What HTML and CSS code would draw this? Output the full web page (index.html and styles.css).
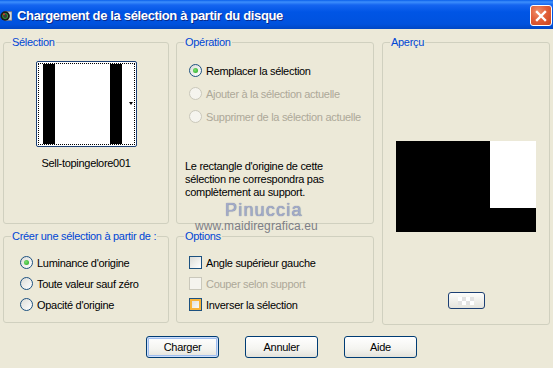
FILE: index.html
```html
<!DOCTYPE html>
<html lang="fr">
  <head>
    <meta charset="UTF-8" />
    <meta name="viewport" content="width=device-width, initial-scale=1.0" />
    <title>Chargement de la sélection à partir du disque</title>
    <link rel="stylesheet" href="styles.css">
  </head>
  <body>
    <div class="titlebar">
      <span class="appicon">
        <svg width="14" height="14" viewBox="0 0 14 14">
          <rect x="6" y="2" width="8" height="10" fill="#d8d8d8" stroke="#7a7a7a" />
          <circle cx="6" cy="7" r="5.5" fill="#1a1a1a" />
          <circle cx="6" cy="7" r="3" fill="#3a3a3a" stroke="#2faa3a" stroke-width="1" />
          <circle cx="4.5" cy="5" r="1.2" fill="#d83a2a" />
        </svg>
      </span>
      <span class="title">Chargement de la sélection à partir du disque</span>
      <span class="close">
        <svg width="12" height="12" viewBox="0 0 12 12">
          <path d="M2 2 L10 10 M10 2 L2 10" stroke="#fff" stroke-width="2.4" stroke-linecap="square" />
        </svg>
      </span>
    </div>

    <div class="panes">
      <fieldset class="box sel">
        <legend>Sélection</legend>
        <div class="thumb">
          <div class="thumb-focus">
            <svg width="95" height="80" viewBox="0 0 95 80">
              <rect x="0" y="0" width="95" height="80" fill="#fff" />
              <rect x="4" y="0" width="12" height="80" fill="#000" />
              <rect x="71" y="0" width="12" height="80" fill="#000" />
            </svg>
          </div>
          <span class="thumb-arrow"></span>
        </div>
        <div class="thumb-name">Sell-topingelore001</div>
      </fieldset>

      <fieldset class="box op">
        <legend>Opération</legend>
        <div class="choices">
          <div class="choice"><span class="radio checked"></span>Remplacer la sélection</div>
          <div class="choice disabled"><span class="radio"></span>Ajouter à la sélection actuelle</div>
          <div class="choice disabled"><span class="radio"></span>Supprimer de la sélection actuelle</div>
        </div>
        <p class="note">Le rectangle d'origine de cette<br>sélection ne correspondra pas<br>complètement au support.</p>
      </fieldset>

      <fieldset class="box preview">
        <legend>Aperçu</legend>
        <div class="preview-img"><div class="preview-white"></div></div>
        <div class="mini-btn"><span class="mini-check"></span></div>
      </fieldset>

      <fieldset class="box create">
        <legend>Créer une sélection à partir de :</legend>
        <div class="choices tight">
          <div class="choice"><span class="radio checked"></span>Luminance d'origine</div>
          <div class="choice"><span class="radio"></span>Toute valeur sauf zéro</div>
          <div class="choice"><span class="radio"></span>Opacité d'origine</div>
        </div>
      </fieldset>

      <fieldset class="box options">
        <legend>Options</legend>
        <div class="choices tight">
          <div class="choice"><span class="check"></span>Angle supérieur gauche</div>
          <div class="choice disabled"><span class="check"></span>Couper selon support</div>
          <div class="choice"><span class="check hot"></span>Inverser la sélection</div>
        </div>
      </fieldset>
    </div>

    <div class="buttons">
      <button class="xpbtn default">Charger</button>
      <button class="xpbtn">Annuler</button>
      <button class="xpbtn">Aide</button>
    </div>

    <div class="wm-name">Pinuccia</div>
    <div class="wm-url">www.maidiregrafica.eu</div>
  </body>
</html>
```

FILE: styles.css
```css
body {
  margin: 0;
  width: 553px;
  height: 368px;
  overflow: hidden;
  background-color: #ece9d8;
  font-family: "Liberation Sans", Arial, sans-serif;
  font-size: 11px;
  letter-spacing: -0.3px;
  color: #000;
  position: relative;
}

/* title bar */
.titlebar {
  height: 29px;
  display: flex;
  align-items: center;
  background: linear-gradient(#0a5fea 0, #3d8ffc 2px, #1565f0 5px, #0055e5 12px, #0052de 24px, #0047c4 29px);
}
.appicon {
  width: 12px;
  height: 14px;
  overflow: hidden;
  display: flex;
  justify-content: flex-end;
  margin-top: 2px;
}
.title {
  margin-left: 5px;
  padding-top: 2px;
  color: #fff;
  font-weight: bold;
  font-size: 13px;
  letter-spacing: -0.35px;
  text-shadow: 1px 1px 0 #0a2a8a;
  white-space: nowrap;
}
.close {
  margin-left: auto;
  margin-right: 1px;
  margin-top: 2px;
  width: 22px;
  height: 21px;
  box-sizing: border-box;
  border: 1px solid #fff;
  border-radius: 3px;
  background: radial-gradient(circle at 35% 30%, #f0906c 0, #e2603a 45%, #c9431d 100%);
  display: flex;
  align-items: center;
  justify-content: center;
}

/* group boxes */
.panes {
  display: grid;
  grid-template-columns: 166px 198px 169px;
  grid-template-rows: 188px 93px;
  column-gap: 7px;
  row-gap: 6px;
  padding: 7px 0 0 3px;
}
.box {
  margin: 0;
  min-width: 0;
  padding: 0 7px;
  border: 1px solid #d0d0bf;
  border-radius: 3px;
  box-sizing: border-box;
}
.box legend {
  padding: 0 1px;
  line-height: 13px;
  color: #0046d5;
}
.sel {
  grid-column: 1;
  grid-row: 1;
}
.op {
  grid-column: 2;
  grid-row: 1;
}
.preview {
  grid-column: 3;
  grid-row: 1 / 3;
  margin-left: 1px;
  margin-bottom: -2px;
}
.create {
  grid-column: 1;
  grid-row: 2;
}
.options {
  grid-column: 2;
  grid-row: 2;
}

/* selection thumbnail */
.thumb {
  position: relative;
  width: 101px;
  height: 86px;
  margin: 12px auto 0;
  box-sizing: border-box;
  border: 1px solid #1c3f73;
  border-radius: 2px;
  padding: 1px;
  background-color: #fff;
}
.thumb-focus {
  border: 1px dotted #000;
  display: flex;
}
.thumb-arrow {
  position: absolute;
  right: 3px;
  top: 40px;
  border-left: 2px solid transparent;
  border-right: 2px solid transparent;
  border-top: 3px solid #000;
}
.thumb-name {
  margin-top: 10px;
  text-align: center;
  line-height: 13px;
}

/* radios and checkboxes */
.choices {
  display: flex;
  flex-direction: column;
  gap: 10px;
  padding-top: 15px;
}
.choices.tight {
  gap: 8px;
  padding-top: 13px;
}
.choice {
  display: flex;
  align-items: center;
  height: 13px;
  margin-left: 5px;
  gap: 4px;
  white-space: nowrap;
}
.create .choice {
  margin-left: 9px;
}
.choice.disabled {
  color: #aca899;
}
.radio,
.check {
  position: relative;
  flex: none;
  width: 13px;
  height: 13px;
  box-sizing: border-box;
  border: 1px solid #1c5180;
  background: linear-gradient(135deg, #dcdcd7, #fff);
}
.radio {
  border-radius: 50%;
}
.radio.checked::after {
  content: "";
  position: absolute;
  left: 3px;
  top: 3px;
  width: 5px;
  height: 5px;
  border-radius: 50%;
  background: radial-gradient(circle at 40% 40%, #7be36f, #21a121);
}
.disabled .radio,
.disabled .check {
  border-color: #cac8bb;
  background: #f5f4ee;
}
.check.hot {
  box-shadow: inset 0 0 0 2px #f8b53c;
}

.note {
  margin: 37px 0 0 1px;
  line-height: 13px;
}

/* preview */
.preview-img {
  width: 140px;
  height: 91px;
  margin: 92px auto 0;
  background-color: #000;
  display: flex;
  justify-content: flex-end;
}
.preview-white {
  width: 46px;
  height: 67px;
  background-color: #fff;
}
.mini-btn {
  width: 37px;
  height: 17px;
  margin: 60px auto 0;
  box-sizing: border-box;
  border: 1px solid #1c3f73;
  border-radius: 3px;
  background: linear-gradient(#fdfdfb, #e4e3dc);
  display: flex;
  align-items: center;
  justify-content: center;
}
.mini-check {
  width: 16px;
  height: 8px;
  background-color: #fff;
  background-image: conic-gradient(#e2e2e2 25%, #fff 0 50%, #e2e2e2 0 75%, #fff 0);
  background-size: 8px 8px;
}

/* buttons */
.buttons {
  display: flex;
  gap: 26px;
  padding-left: 146px;
  margin-top: 13px;
}
.xpbtn {
  width: 73px;
  height: 22px;
  border: 1px solid #003c74;
  border-radius: 3px;
  background: linear-gradient(#fff 0, #f4f4f0 60%, #e3e2da 100%);
  font-family: "Liberation Sans", Arial, sans-serif;
  font-size: 11px;
  letter-spacing: -0.3px;
  color: #000;
  padding: 0;
}
.xpbtn.default {
  box-shadow: inset 0 0 0 1px #cfdffa, inset 0 0 0 2px #9fbdee;
}

/* watermark over the dialog */
.wm-name {
  position: absolute;
  left: 225px;
  top: 201px;
  font-size: 18px;
  line-height: 18px;
  letter-spacing: 1.2px;
  color: #a3abc9;
  text-shadow: 0 0 1px #5f6a8e;
}
.wm-url {
  position: absolute;
  left: 195px;
  top: 219px;
  font-size: 12px;
  line-height: 14px;
  letter-spacing: 0.1px;
  color: #7d7e86;
}
```
